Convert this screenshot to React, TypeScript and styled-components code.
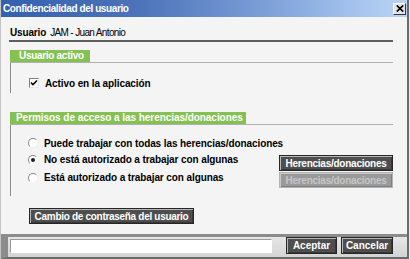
import React from "react"
import styled, { createGlobalStyle } from "styled-components"

const GlobalStyle = createGlobalStyle`
  html, body {
    margin: 0;
    padding: 0;
    background: #ececec;
  }
  body {
    font-family: "Liberation Sans", Arial, sans-serif;
  }
`

const Window = styled.div`
  width: 409px;
  height: 259px;
  box-sizing: border-box;
  display: flex;
  flex-direction: column;
  background: #f4f4f4;
  border-left: 1px solid #c4c4c4;
  border-right: 2px solid #6a6a6a;
  overflow: hidden;
`

const TitleBar = styled.div`
  height: 17px;
  flex: none;
  display: flex;
  align-items: center;
  justify-content: space-between;
  padding: 0 1px 0 2px;
  background: linear-gradient(90deg, #3560ac 0%, #4e74ba 35%, #7c9fd8 65%, #a9c7ef 90%, #b8d3f3 100%);
  color: #fff;
  font-weight: 700;
  font-size: 10px;
  letter-spacing: -0.4px;
`

const CloseButton = styled.div`
  width: 13px;
  height: 12px;
  box-sizing: border-box;
  display: flex;
  align-items: center;
  justify-content: center;
  background: #e2e2e2;
  border: 1px solid;
  border-color: #fff #3a3a3a #3a3a3a #fff;
`

const Content = styled.div`
  flex: 1;
  display: flex;
  flex-direction: column;
  padding: 7px 14px 0 8px;
  font-size: 10px;
  color: #000;
`

const UserRow = styled.div`
  height: 16px;
  display: flex;
  align-items: center;
  gap: 4px;
  padding-left: 1px;
  border-bottom: 2px solid #5e5e5e;
`

const UserLabel = styled.span`
  font-weight: 700;
  letter-spacing: -0.15px;
`

const UserName = styled.span`
  font-size: 10px;
  letter-spacing: -0.65px;
`

const Section = styled.div<{ $top: number; $height: number }>`
  margin-top: ${(p) => p.$top}px;
  margin-left: 1px;
  display: flex;
  flex-direction: column;
  height: ${(p) => p.$height}px;
`

const TabRow = styled.div`
  display: flex;
  align-items: flex-end;
  flex: none;
`

const Tab = styled.div<{ $pad: string; $spacing: number }>`
  background: #84c152;
  color: #fff;
  font-weight: 700;
  font-size: 10px;
  height: 12px;
  line-height: 12px;
  padding: ${(p) => p.$pad};
  letter-spacing: ${(p) => p.$spacing}px;
  border-bottom: 1px solid #b0b0b0;
  white-space: nowrap;
`

const TabLine = styled.div`
  flex: 1;
  border-bottom: 1px solid #b0b0b0;
`

const Box = styled.div<{ $top: number }>`
  flex: 1;
  border-left: 1px solid #8c8c8c;
  display: flex;
  flex-direction: column;
  padding-left: 17px;
  padding-top: ${(p) => p.$top}px;
`

const OptionRow = styled.div<{ $height: number }>`
  height: ${(p) => p.$height}px;
  display: flex;
  align-items: center;
  font-weight: 700;
  letter-spacing: -0.1px;
  white-space: nowrap;
`

const Check = styled.div`
  width: 10px;
  height: 10px;
  box-sizing: border-box;
  border: 1px solid;
  border-color: #808080 #e8e8e8 #e8e8e8 #808080;
  background: #fff;
  margin-left: 1px;
  margin-right: 6px;
  display: flex;
  align-items: center;
  justify-content: center;
`

const Radio = styled.div<{ $on?: boolean }>`
  width: 10px;
  height: 10px;
  box-sizing: border-box;
  border-radius: 50%;
  border: 1px solid;
  border-color: #8a8a8a #f0f0f0 #f0f0f0 #8a8a8a;
  background: #fff;
  margin-right: 6px;
  display: flex;
  align-items: center;
  justify-content: center;
  &::after {
    content: "";
    display: ${(p) => (p.$on ? "block" : "none")};
    width: 4px;
    height: 4px;
    border-radius: 50%;
    background: #1e1e1e;
  }
`

const Spacer = styled.div`
  flex: 1;
`

const GrayButton = styled.div<{ $disabled?: boolean; $width: number; $height?: number; $shift?: number; $spacing?: number }>`
  width: ${(p) => p.$width}px;
  height: ${(p) => p.$height ?? 16}px;
  margin-top: ${(p) => p.$shift ?? 0}px;
  box-sizing: border-box;
  display: flex;
  align-items: center;
  justify-content: center;
  background: ${(p) => (p.$disabled ? "#9a9a9a" : "#4e4e4e")};
  color: ${(p) => (p.$disabled ? "#c6c6c6" : "#fff")};
  border: 1px solid ${(p) => (p.$disabled ? "#b4b4b4" : "#262626")};
  box-shadow: inset 1px 1px 0 ${(p) => (p.$disabled ? "#c8c8c8" : "#b8b8b8")},
    inset -1px -1px 0 ${(p) => (p.$disabled ? "#808080" : "#383838")};
  font-weight: 700;
  font-size: 10px;
  letter-spacing: ${(p) => p.$spacing ?? 0}px;
  white-space: nowrap;
  flex: none;
`

const ButtonRow = styled.div`
  margin-top: 12px;
  padding-left: 20px;
  display: flex;
`

const Footer = styled.div`
  height: 25px;
  box-sizing: border-box;
  flex: none;
  display: flex;
  align-items: flex-start;
  background: linear-gradient(180deg, #e6e6e6, #d4d4d4);
  border-top: 3px solid #8c8c8c;
  border-bottom: 2px solid #6a6a6a;
  border-left: 8px solid #8c8c8c;
  margin-left: -1px;
  padding: 0 0 0 2px;
`

const StatusInput = styled.div`
  width: 262px;
  height: 14px;
  margin-top: 2px;
  margin-right: 14px;
  box-sizing: border-box;
  background: #fff;
  border: 1px solid;
  border-color: #9a9a9a #ffffff #ffffff #9a9a9a;
`

const FooterButtons = styled.div`
  display: flex;
  gap: 4px;
`

export default function App() {
  return (
    <>
      <GlobalStyle />
      <Window>
        <TitleBar>
          <span>Confidencialidad del usuario</span>
          <CloseButton>
            <svg width="8" height="7" viewBox="0 0 8 7">
              <path d="M0.8 0.5 L7.2 6.5 M7.2 0.5 L0.8 6.5" stroke="#000" strokeWidth="1.7" />
            </svg>
          </CloseButton>
        </TitleBar>
        <Content>
          <UserRow>
            <UserLabel>Usuario</UserLabel>
            <UserName>JAM - Juan Antonio</UserName>
          </UserRow>
          <Section $top={8} $height={43}>
            <TabRow>
              <Tab $pad="0 6px 0 9px" $spacing={-0.3}>Usuario activo</Tab>
              <TabLine />
            </TabRow>
            <Box $top={12}>
              <OptionRow $height={16}>
                <Check>
                  <svg width="8" height="8" viewBox="0 0 8 8">
                    <path d="M1 3.6 L3 5.6 L7 1.4" stroke="#000" strokeWidth="1.5" fill="none" />
                  </svg>
                </Check>
                Activo en la aplicación
              </OptionRow>
            </Box>
          </Section>
          <Section $top={19} $height={84}>
            <TabRow>
              <Tab $pad="0 3px 0 6px" $spacing={-0.05}>
                Permisos de acceso a las herencias/donaciones
              </Tab>
              <TabLine />
            </TabRow>
            <Box $top={10}>
              <OptionRow $height={16}>
                <Radio />
                Puede trabajar con todas las herencias/donaciones
              </OptionRow>
              <OptionRow $height={17}>
                <Radio $on />
                No está autorizado a trabajar con algunas
                <Spacer />
                <GrayButton $width={114} $shift={7} $spacing={-0.25}>
                  Herencias/donaciones
                </GrayButton>
              </OptionRow>
              <OptionRow $height={19}>
                <Radio />
                Está autorizado a trabajar con algunas
                <Spacer />
                <GrayButton $width={114} $shift={5} $spacing={-0.25} $disabled>
                  Herencias/donaciones
                </GrayButton>
              </OptionRow>
            </Box>
          </Section>
          <ButtonRow>
            <GrayButton $width={165} $spacing={-0.3}>
              Cambio de contraseña del usuario
            </GrayButton>
          </ButtonRow>
        </Content>
        <Footer>
          <StatusInput />
          <FooterButtons>
            <GrayButton $width={51} $height={17}>Aceptar</GrayButton>
            <GrayButton $width={52} $height={17}>Cancelar</GrayButton>
          </FooterButtons>
        </Footer>
      </Window>
    </>
  )
}
